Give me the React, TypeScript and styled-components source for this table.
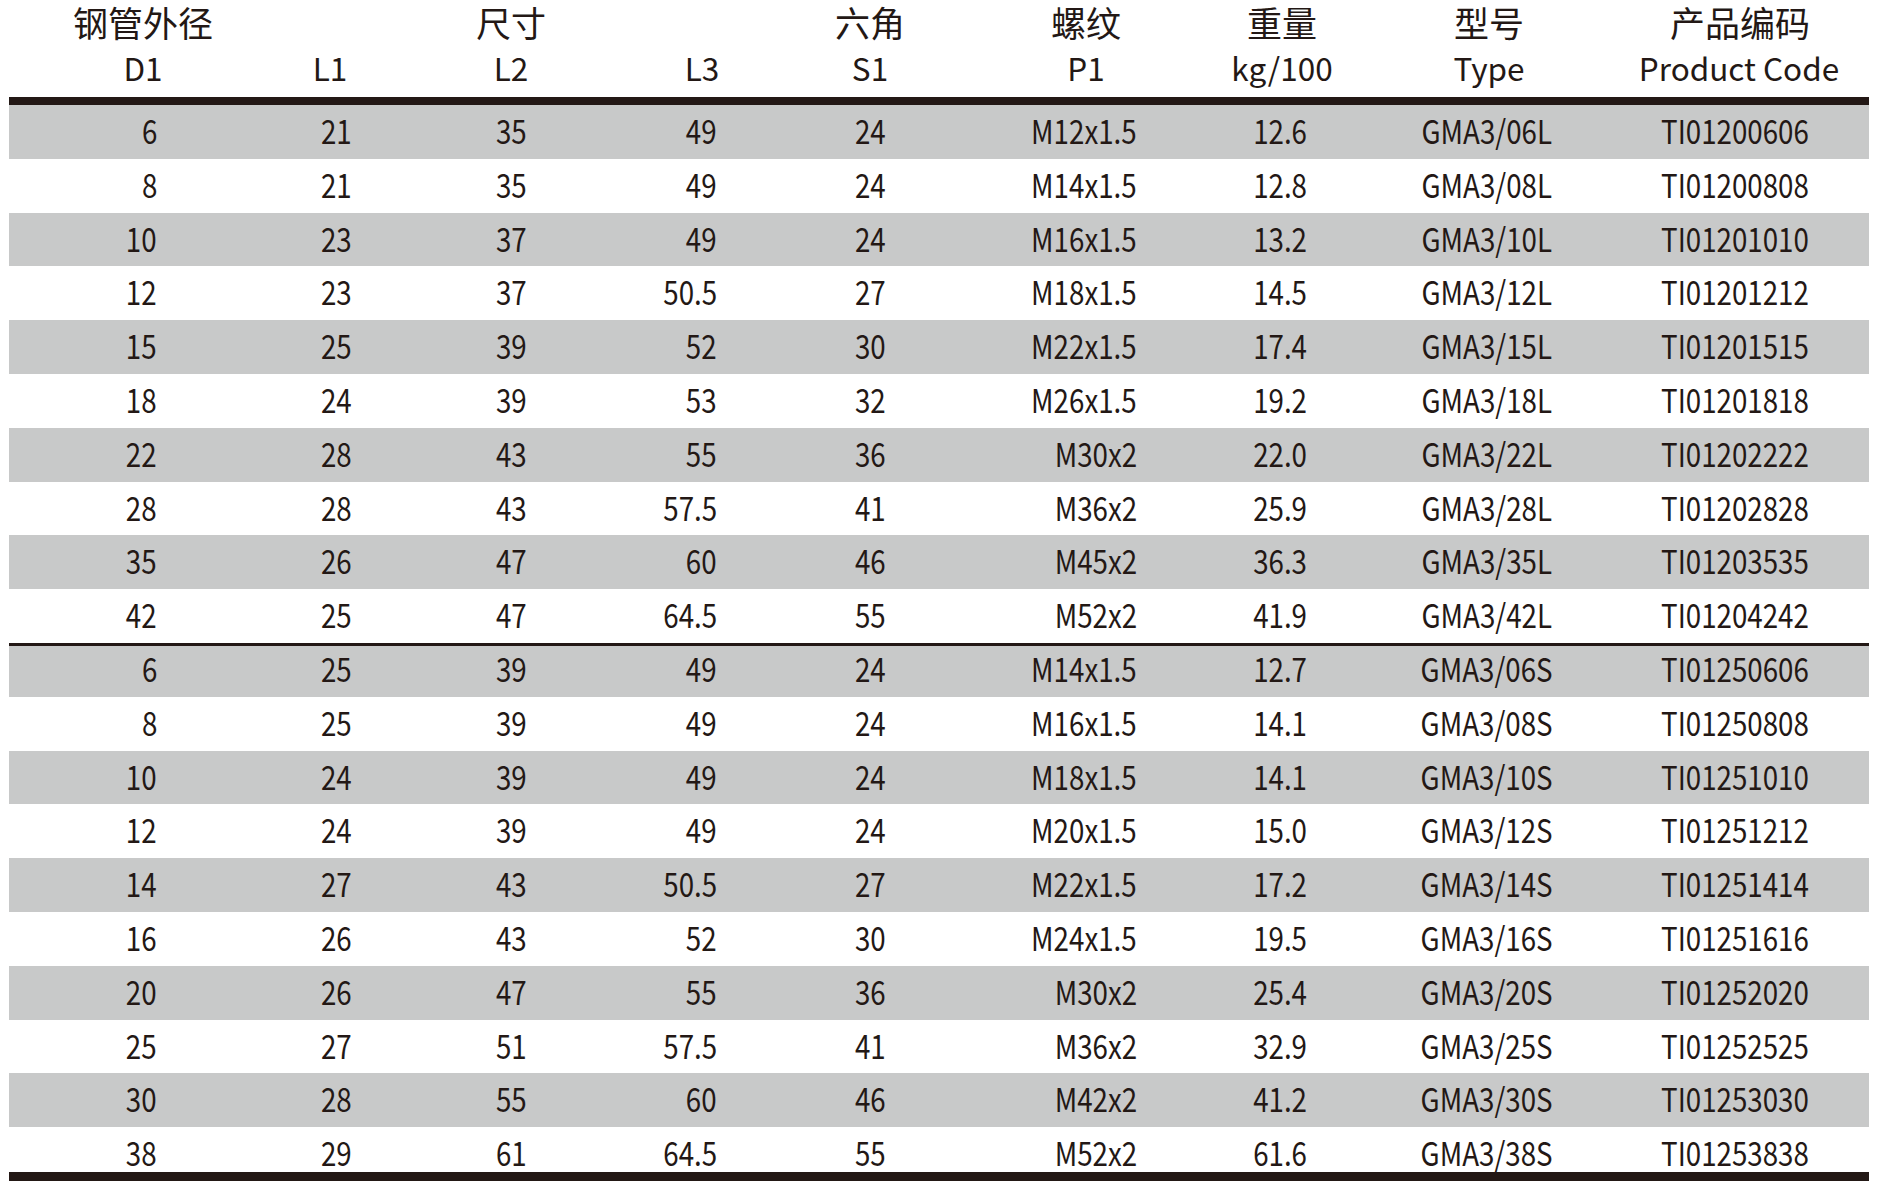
import React from "react";
import styled, { createGlobalStyle } from "styled-components";

const ink = "#231815";
const shade = "#c8c9c9";

const GlobalStyle = createGlobalStyle`
  html, body {
    margin: 0;
    padding: 0;
    background: #ffffff;
  }
  body {
    font-family: "Noto Sans CJK SC", "Noto Sans", sans-serif;
    color: ${ink};
  }
`;

// column widths, shared by header and body rows
const columns = "268px 118px 232px 150px 186px 246px 146px 268px 246px";

type Align = "center" | "right";

interface ColumnSpec {
  align: Align;
  pad: number;
}

// body alignment per column: D1, L3 and P1 are right-aligned in the source
const bodyColumns: ColumnSpec[] = [
  { align: "right", pad: 120 },
  { align: "center", pad: 0 },
  { align: "center", pad: 0 },
  { align: "right", pad: 60 },
  { align: "center", pad: 0 },
  { align: "right", pad: 72 },
  { align: "center", pad: 4 },
  { align: "center", pad: 4 },
  { align: "center", pad: 22 },
];

const Page = styled.div`
  width: 1860px;
  padding-left: 9px;
`;

const HeaderGrid = styled.div`
  display: grid;
  grid-template-columns: ${columns};
  grid-template-rows: 43px 54px;
`;

const HeadCell = styled.div<{ pad?: number; cjk?: boolean }>`
  display: flex;
  align-items: center;
  justify-content: center;
  padding-right: ${(p) => p.pad ?? 0}px;
  padding-bottom: ${(p) => (p.cjk ? 0 : 4)}px;
  font-size: ${(p) => (p.cjk ? 35 : 31.5)}px;
  line-height: 1.2;
  white-space: nowrap;
`;

const Rule = styled.div<{ weight: number }>`
  height: ${(p) => p.weight}px;
  background: ${ink};
`;

const Body = styled.div`
  display: flex;
  flex-direction: column;
`;

// divider lines are painted over the row grid, so the row pitch stays even
const Row = styled.div<{ shaded: boolean; line?: "top" | "bottom" }>`
  display: grid;
  grid-template-columns: ${columns};
  height: 53.8px;
  background: ${(p) => (p.shaded ? shade : "transparent")};
  box-shadow: ${(p) =>
    p.line === "top"
      ? `inset 0 3px 0 ${ink}`
      : p.line === "bottom"
        ? `inset 0 -9px 0 ${ink}`
        : "none"};
`;

const Cell = styled.div<{ align: Align; pad: number }>`
  display: flex;
  align-items: center;
  justify-content: ${(p) => (p.align === "right" ? "flex-end" : "center")};
  padding-right: ${(p) => p.pad}px;
  padding-bottom: 2px;
`;

const Value = styled.span<{ align: Align }>`
  display: inline-block;
  font-size: 33px;
  line-height: 1.2;
  white-space: nowrap;
  transform: scaleX(0.84);
  transform-origin: ${(p) => (p.align === "right" ? "right" : "center")} center;
`;

const groupL: string[][] = [
  ["6", "21", "35", "49", "24", "M12x1.5", "12.6", "GMA3/06L", "TI01200606"],
  ["8", "21", "35", "49", "24", "M14x1.5", "12.8", "GMA3/08L", "TI01200808"],
  ["10", "23", "37", "49", "24", "M16x1.5", "13.2", "GMA3/10L", "TI01201010"],
  ["12", "23", "37", "50.5", "27", "M18x1.5", "14.5", "GMA3/12L", "TI01201212"],
  ["15", "25", "39", "52", "30", "M22x1.5", "17.4", "GMA3/15L", "TI01201515"],
  ["18", "24", "39", "53", "32", "M26x1.5", "19.2", "GMA3/18L", "TI01201818"],
  ["22", "28", "43", "55", "36", "M30x2", "22.0", "GMA3/22L", "TI01202222"],
  ["28", "28", "43", "57.5", "41", "M36x2", "25.9", "GMA3/28L", "TI01202828"],
  ["35", "26", "47", "60", "46", "M45x2", "36.3", "GMA3/35L", "TI01203535"],
  ["42", "25", "47", "64.5", "55", "M52x2", "41.9", "GMA3/42L", "TI01204242"],
];

const groupS: string[][] = [
  ["6", "25", "39", "49", "24", "M14x1.5", "12.7", "GMA3/06S", "TI01250606"],
  ["8", "25", "39", "49", "24", "M16x1.5", "14.1", "GMA3/08S", "TI01250808"],
  ["10", "24", "39", "49", "24", "M18x1.5", "14.1", "GMA3/10S", "TI01251010"],
  ["12", "24", "39", "49", "24", "M20x1.5", "15.0", "GMA3/12S", "TI01251212"],
  ["14", "27", "43", "50.5", "27", "M22x1.5", "17.2", "GMA3/14S", "TI01251414"],
  ["16", "26", "43", "52", "30", "M24x1.5", "19.5", "GMA3/16S", "TI01251616"],
  ["20", "26", "47", "55", "36", "M30x2", "25.4", "GMA3/20S", "TI01252020"],
  ["25", "27", "51", "57.5", "41", "M36x2", "32.9", "GMA3/25S", "TI01252525"],
  ["30", "28", "55", "60", "46", "M42x2", "41.2", "GMA3/30S", "TI01253030"],
  ["38", "29", "61", "64.5", "55", "M52x2", "61.6", "GMA3/38S", "TI01253838"],
];

const topHeads = ["钢管外径", "", "尺寸", "", "六角", "螺纹", "重量", "型号", "产品编码"];
const subHeads = ["D1", "L1", "L2", "L3", "S1", "P1", "kg/100", "Type", "Product Code"];

const groups = [groupL, groupS];

const App = (): JSX.Element => (
  <>
    <GlobalStyle />
    <Page>
      <HeaderGrid>
        {topHeads.map((t, i) => (
          <HeadCell key={`t${i}`} cjk pad={i === 8 ? 12 : 0}>
            {t}
          </HeadCell>
        ))}
        {subHeads.map((t, i) => (
          <HeadCell key={`s${i}`} pad={i === 8 ? 14 : i === 1 ? 12 : 0}>
            {t}
          </HeadCell>
        ))}
      </HeaderGrid>
      <Rule weight={8} />
      <Body>
        {groups.map((rows, g) =>
          rows.map((row, i) => (
            <Row
              key={row[8]}
              shaded={i % 2 === 0}
              line={
                g === 1 && i === 0
                  ? "top"
                  : g === 1 && i === rows.length - 1
                    ? "bottom"
                    : undefined
              }
            >
              {row.map((v, c) => (
                <Cell key={c} align={bodyColumns[c].align} pad={bodyColumns[c].pad}>
                  <Value align={bodyColumns[c].align}>{v}</Value>
                </Cell>
              ))}
            </Row>
          ))
        )}
      </Body>
    </Page>
  </>
);

export default App;
